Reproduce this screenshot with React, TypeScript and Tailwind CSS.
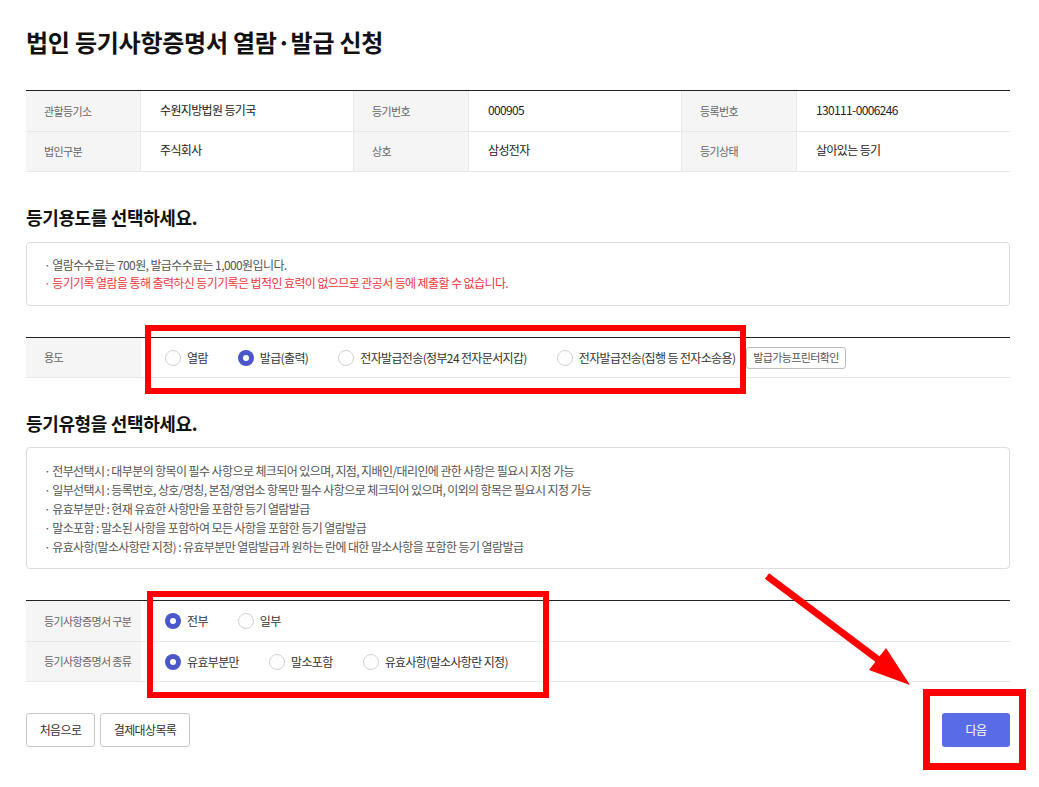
import type { FC, ReactNode } from 'react'
import clsx from 'clsx'

const Radio: FC<{ label: string; checked?: boolean }> = ({ label, checked = false }) => (
  <label className="flex items-center gap-[6px] whitespace-nowrap">
    <span
      className={clsx(
        'flex h-[16px] w-[16px] shrink-0 items-center justify-center rounded-full',
        checked ? 'bg-[#4b57c9]' : 'border border-[#d2d2d2] bg-white',
      )}
    >
      {checked && <span className="h-[6px] w-[6px] rounded-full bg-white" />}
    </span>
    <span className="text-[12px] text-[#333]">{label}</span>
  </label>
)

const LabelCell: FC<{ children: ReactNode; className?: string }> = ({ children, className }) => (
  <div
    className={clsx(
      'flex items-center border-b border-r border-[#e8e8e8] bg-[#f5f5f5] pl-[18px] text-[11px] text-[#666]',
      className,
    )}
  >
    {children}
  </div>
)

const ValueCell: FC<{ children: ReactNode; last?: boolean; className?: string }> = ({
  children,
  last,
  className,
}) => (
  <div
    className={clsx(
      'flex items-center border-b border-[#e8e8e8] pb-[3px] pl-[19px] text-[12px] text-[#222]',
      { 'border-r': !last },
      className,
    )}
  >
    {children}
  </div>
)

export default function App() {
  return (
    <div className="relative min-h-[787px] w-full bg-white font-['Noto_Sans_CJK_KR','Noto_Sans',sans-serif] tracking-[-0.04em] text-[#222]">
      <div className="ml-[26px] w-[984px] pt-[26px]">
        <h1 className="text-[24px] font-bold leading-[32px] tracking-[-0.01em] text-[#111]">
          법인 등기사항증명서 열람·발급 신청
        </h1>

        {/* 등기 정보 */}
        <div className="mt-[32px] grid grid-cols-[115px_213px_115px_213px_115px_213px] border-t border-[#222]">
          <LabelCell className="h-[41px]">관할등기소</LabelCell>
          <ValueCell className="h-[41px]">수원지방법원 등기국</ValueCell>
          <LabelCell className="h-[41px]">등기번호</LabelCell>
          <ValueCell className="h-[41px]">000905</ValueCell>
          <LabelCell className="h-[41px]">등록번호</LabelCell>
          <ValueCell className="h-[41px]" last>
            130111-0006246
          </ValueCell>
          <LabelCell className="h-[40px]">법인구분</LabelCell>
          <ValueCell className="h-[40px]">주식회사</ValueCell>
          <LabelCell className="h-[40px]">상호</LabelCell>
          <ValueCell className="h-[40px]">삼성전자</ValueCell>
          <LabelCell className="h-[40px]">등기상태</LabelCell>
          <ValueCell className="h-[40px]" last>
            살아있는 등기
          </ValueCell>
        </div>

        {/* 등기용도 */}
        <h2 className="mt-[32px] text-[18px] font-bold leading-[26px] tracking-[-0.02em] text-[#111]">
          등기용도를 선택하세요.
        </h2>
        <div className="mt-[12px] rounded-[4px] border border-[#dddddd] px-[17px] py-[13px] text-[12px] leading-[18px] tracking-[-0.05em] text-[#555]">
          <p>· 열람수수료는 700원, 발급수수료는 1,000원입니다.</p>
          <p className="text-[#f0363d]">
            · 등기기록 열람을 통해 출력하신 등기기록은 법적인 효력이 없으므로 관공서 등에 제출할 수 없습니다.
          </p>
        </div>

        <div className="mt-[31px] flex h-[41px] border-t border-b border-t-[#222] border-b-[#e8e8e8]">
          <div className="flex w-[115px] items-center bg-[#f5f5f5] pl-[18px] text-[11px] text-[#666]">
            용도
          </div>
          <div className="flex items-center pl-[24px]">
            <div className="flex items-center gap-[30px]">
              <Radio label="열람" />
              <Radio label="발급(출력)" checked />
              <Radio label="전자발급전송(정부24 전자문서지갑)" />
              <Radio label="전자발급전송(집행 등 전자소송용)" />
            </div>
            <button className="ml-[11px] h-[22px] rounded-[3px] border border-[#bbbbbb] bg-white px-[6px] text-[11px] text-[#555]">
              발급가능프린터확인
            </button>
          </div>
        </div>

        {/* 등기유형 */}
        <h2 className="mt-[32px] text-[18px] font-bold leading-[26px] tracking-[-0.02em] text-[#111]">
          등기유형을 선택하세요.
        </h2>
        <div className="mt-[11px] rounded-[4px] border border-[#dddddd] px-[17px] pt-[13px] pb-[12px] text-[12px] leading-[19px] tracking-[-0.05em] text-[#555]">
          <p>· 전부선택시 : 대부분의 항목이 필수 사항으로 체크되어 있으며, 지점, 지배인/대리인에 관한 사항은 필요시 지정 가능</p>
          <p>· 일부선택시 : 등록번호, 상호/명칭, 본점/영업소 항목만 필수 사항으로 체크되어 있으며, 이외의 항목은 필요시 지정 가능</p>
          <p>· 유효부분만 : 현재 유효한 사항만을 포함한 등기 열람발급</p>
          <p>· 말소포함 : 말소된 사항을 포함하여 모든 사항을 포함한 등기 열람발급</p>
          <p>· 유효사항(말소사항란 지정) : 유효부분만 열람발급과 원하는 란에 대한 말소사항을 포함한 등기 열람발급</p>
        </div>

        <div className="mt-[31px] border-t border-[#222]">
          <div className="flex h-[41px] border-b border-[#e8e8e8]">
            <div className="flex w-[115px] items-center bg-[#f5f5f5] pl-[18px] text-[11px] text-[#666]">
              등기사항증명서 구분
            </div>
            <div className="flex items-center gap-[30px] pl-[24px]">
              <Radio label="전부" checked />
              <Radio label="일부" />
            </div>
          </div>
          <div className="flex h-[40px] border-b border-[#e8e8e8]">
            <div className="flex w-[115px] items-center bg-[#f5f5f5] pl-[18px] text-[11px] text-[#666]">
              등기사항증명서 종류
            </div>
            <div className="flex items-center gap-[30px] pl-[24px]">
              <Radio label="유효부분만" checked />
              <Radio label="말소포함" />
              <Radio label="유효사항(말소사항란 지정)" />
            </div>
          </div>
        </div>

        {/* 버튼 */}
        <div className="mt-[31px] flex items-center justify-between">
          <div className="flex gap-[5px]">
            <button className="h-[34px] w-[69px] rounded-[3px] border border-[#c8c8c8] bg-white text-[12px] text-[#333]">
              처음으로
            </button>
            <button className="h-[34px] w-[90px] rounded-[3px] border border-[#c8c8c8] bg-white text-[12px] text-[#333]">
              결제대상목록
            </button>
          </div>
          <button className="h-[34px] w-[68px] rounded-[3px] bg-[#5a6be8] text-[12px] text-white">
            다음
          </button>
        </div>
      </div>

      {/* 강조 표시 */}
      <div className="pointer-events-none absolute left-[145px] top-[325px] h-[69px] w-[601px] border-[6px] border-[#ff0000]" />
      <div className="pointer-events-none absolute left-[147px] top-[591px] h-[107px] w-[402px] border-[6px] border-[#ff0000]" />
      <div className="pointer-events-none absolute left-[923px] top-[689px] h-[81px] w-[103px] border-[7px] border-[#ff0000]" />
      <svg
        className="pointer-events-none absolute left-0 top-0"
        width="1039"
        height="787"
        viewBox="0 0 1039 787"
      >
        <line x1="767" y1="576" x2="880" y2="661" stroke="#ff0000" strokeWidth="7" />
        <polygon points="910,685 869,670 886,648" fill="#ff0000" />
      </svg>
    </div>
  )
}
